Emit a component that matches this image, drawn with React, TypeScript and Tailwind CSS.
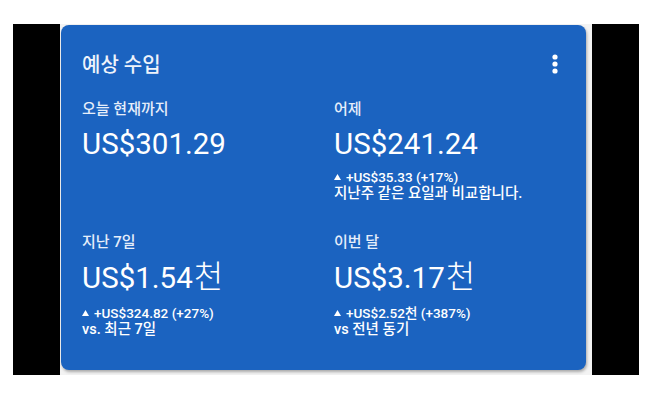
import React from 'react';

type Stat = {
  label: string;
  value: string;
  unit?: string;
  delta?: string;
  note?: string;
};

const rows: { gap: string; subGap: string; stats: Stat[] }[] = [
  {
    gap: 'mt-[22px]',
    subGap: 'mt-[7px]',
    stats: [
      { label: '오늘 현재까지', value: 'US$301.29' },
      {
        label: '어제',
        value: 'US$241.24',
        delta: '+US$35.33 (+17%)',
        note: '지난주 같은 요일과 비교합니다.',
      },
    ],
  },
  {
    gap: 'mt-[30px]',
    subGap: 'mt-[10px]',
    stats: [
      {
        label: '지난 7일',
        value: 'US$1.54',
        unit: '천',
        delta: '+US$324.82 (+27%)',
        note: 'vs. 최근 7일',
      },
      {
        label: '이번 달',
        value: 'US$3.17',
        unit: '천',
        delta: '+US$2.52천 (+387%)',
        note: 'vs 전년 동기',
      },
    ],
  },
];

function MoreIcon() {
  return (
    <svg width="6" height="20" viewBox="0 0 6 20" fill="#fff">
      <circle cx="3" cy="3" r="2.6" />
      <circle cx="3" cy="10" r="2.6" />
      <circle cx="3" cy="17" r="2.6" />
    </svg>
  );
}

function StatCell({ stat, subGap }: { stat: Stat; subGap: string }) {
  return (
    <div className="flex flex-col">
      <div className="h-[20px] leading-[20px] text-[15px] font-medium text-[#e6eefa]">{stat.label}</div>
      <div className="mt-[7px] h-[36px] leading-[36px] text-[29.5px] text-white whitespace-nowrap">
        {stat.value}
        {stat.unit && <span className="ml-[1px] text-[32px] font-light">{stat.unit}</span>}
      </div>
      {stat.delta && (
        <div className={`${subGap} font-medium text-white`}>
          <div className="h-[16px] leading-[16px] flex items-center text-[13.5px] whitespace-nowrap">
            <svg width="7" height="6" viewBox="0 0 7 6" fill="#fff" className="mr-[5px]">
              <path d="M3.5 0L7 6H0z" />
            </svg>
            {stat.delta}
          </div>
          <div className="h-[17px] text-[14.5px] leading-[17px] whitespace-nowrap">{stat.note}</div>
        </div>
      )}
    </div>
  );
}

export default function App() {
  return (
    <div
      className="w-[652px] h-[400px] bg-white pt-[24px] pl-[13px]"
      style={{ fontFamily: 'Roboto, "Noto Sans CJK KR", "Noto Sans", sans-serif' }}
    >
      <div className="w-[626px] h-[351px] bg-black px-[47px]">
        <div className="w-[532px] h-full bg-[#f3f3f3] pt-[1px] pl-[1px]">
          <div className="w-[525px] h-[345px] rounded-[8px] bg-[#1b63c0] shadow-[1px_2px_3px_rgba(0,0,0,0.3)] pl-[21px] pr-[28px] pt-[28px]">
            <div className="flex items-center justify-between h-[24px]">
              <div className="text-[20px] font-medium leading-[24px] text-[#eef3fb]">예상 수입</div>
              <div className="-mt-[2px]">
                <MoreIcon />
              </div>
            </div>
            {rows.map((row, i) => (
              <div key={i} className={`${row.gap} grid grid-cols-[252px_1fr] items-start`}>
                {row.stats.map((s) => (
                  <StatCell key={s.label} stat={s} subGap={row.subGap} />
                ))}
              </div>
            ))}
          </div>
        </div>
      </div>
    </div>
  );
}
